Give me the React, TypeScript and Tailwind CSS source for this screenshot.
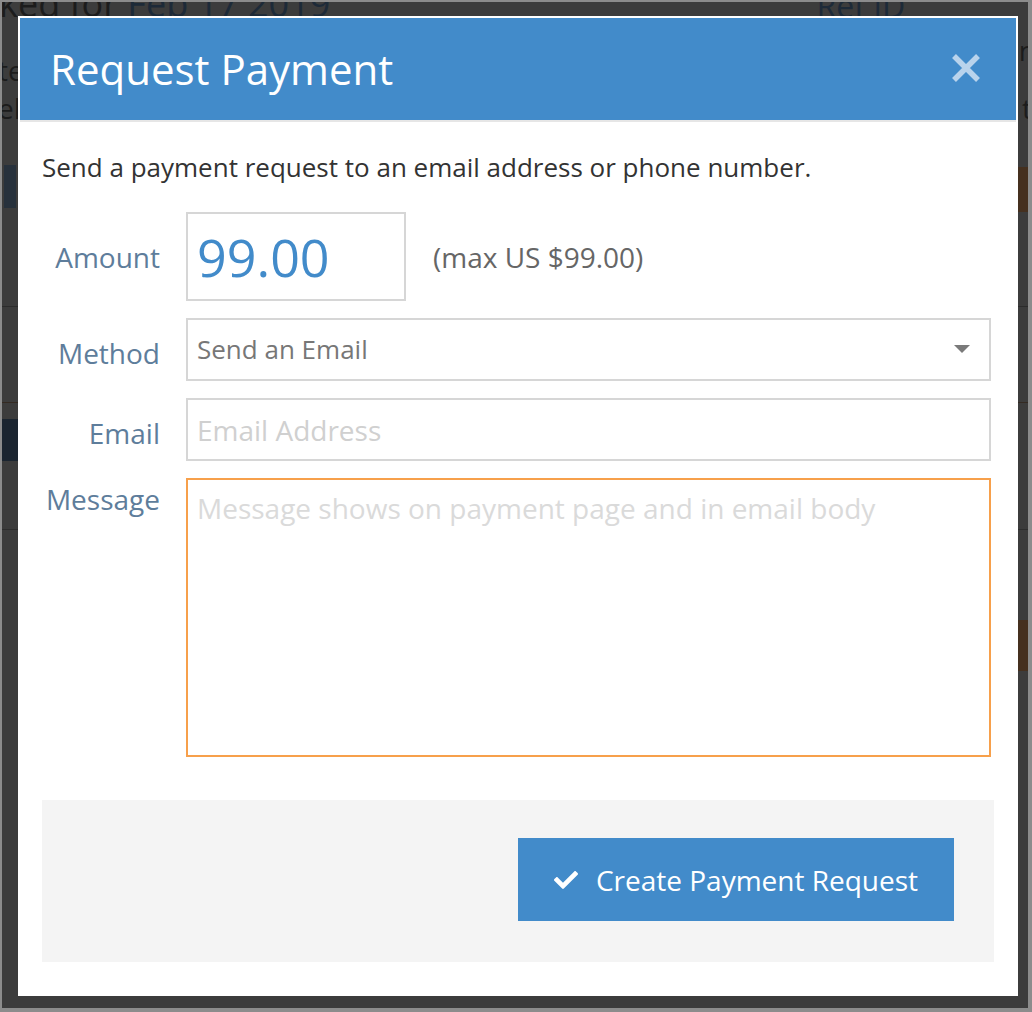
import React from "react";
import { FaCheck } from "react-icons/fa";

const font = { fontFamily: '"Open Sans", "Noto Sans", sans-serif' };

function Background() {
  return (
    <div className="flex h-full w-full flex-col overflow-hidden bg-[#3c3c3c] text-[#1c1c1c]">
      <div className="-mt-[14px] flex h-[34px] items-end leading-none">
        <span className="ml-[-3px] text-[36px]">
          ked for <span className="text-[#1d2a38]">Feb 17 2019</span>
        </span>
        <span className="ml-[486px] text-[32px] text-[#1d2a38]">Ref ID</span>
      </div>
      <div className="mt-[34px] flex h-[28px] justify-between text-[28px] leading-none">
        <span className="ml-[-4px]">te</span>
        <span className="mr-[-8px] -mt-[20px]">n</span>
      </div>
      <div className="mt-[10px] flex h-[28px] justify-between text-[28px] leading-none">
        <span className="ml-[-4px]">el</span>
        <span className="mr-[-4px]">t</span>
      </div>
      <div className="mt-[10px] flex h-[80px] justify-between">
        <div className="mt-[33px] ml-[2px] h-[43px] w-[12px] bg-[#27313c]" />
        <div className="mt-[35px] h-[45px] w-[10px] bg-[#45301f]" />
      </div>
      <div className="mt-[94px] h-[1px] w-full bg-[#2c2c2c]" />
      <div className="mt-[95px] h-[1px] w-full bg-[#342a22]" />
      <div className="mt-[16px] flex h-[42px] justify-start">
        <div className="h-[42px] w-[18px] bg-[#1b2530]" />
      </div>
      <div className="mt-[68px] h-[1px] w-full bg-[#2e2e2e]" />
      <div className="mt-[90px] flex justify-end">
        <div className="h-[51px] w-[10px] bg-[#45301f]" />
      </div>
    </div>
  );
}

function Label({ children, pt }: { children: React.ReactNode; pt: string }) {
  return (
    <div className={`w-[118px] shrink-0 whitespace-nowrap text-right text-[28px] leading-[36px] text-[#5e7d9b] ${pt}`}>
      {children}
    </div>
  );
}

export default function App() {
  return (
    <div className="relative h-[1012px] w-[1032px] overflow-hidden border-t-[2px] border-l-[2px] border-r-[4px] border-b-[4px] border-[#8c8c8c]" style={font}>
      <Background />
      <div className="absolute left-[16px] top-[14px] flex h-[980px] w-[1000px] flex-col bg-white p-[2px]">
        <div className="flex h-[102px] items-center justify-between bg-[#428bca] pl-[30px] pr-[34px]">
          <h1 className="text-[42px] font-normal leading-none text-white">Request Payment</h1>
          <svg width="32" height="32" viewBox="0 0 32 32" className="mt-[-2px]">
            <path d="M4 4 L28 28 M28 4 L4 28" stroke="#b9d3ec" strokeWidth="5.5" strokeLinecap="butt" />
          </svg>
        </div>
        <div className="h-[2px] bg-[#e6e6e6]" />
        <div className="flex flex-1 flex-col px-[22px]">
          <p className="mt-[28px] whitespace-nowrap text-[26px] leading-[34px] text-[#333333]">
            Send a payment request to an email address or phone number.
          </p>
          <div className="mt-[28px] flex flex-col gap-[17px] pr-[3px]">
            <div className="flex gap-[26px]">
              <Label pt="pt-[27px]">Amount</Label>
              <div className="flex items-center">
                <div className="flex h-[89px] w-[220px] items-center border-2 border-[#d6d6d6] px-[9px]">
                  <span className="text-[52px] leading-none text-[#428bca]">99.00</span>
                </div>
                <span className="ml-[27px] whitespace-nowrap text-[28px] text-[#666666]">(max US $99.00)</span>
              </div>
            </div>
            <div className="flex gap-[26px]">
              <Label pt="pt-[17px]">Method</Label>
              <div className="flex h-[63px] flex-1 items-center justify-between border-2 border-[#d6d6d6] pl-[9px] pr-[19px]">
                <span className="text-[26px] text-[#777777]">Send an Email</span>
                <svg width="16" height="9" viewBox="0 0 16 9">
                  <path d="M0 0 H16 L8 8 Z" fill="#7a7a7a" />
                </svg>
              </div>
            </div>
            <div className="flex gap-[26px]">
              <Label pt="pt-[17px]">Email</Label>
              <div className="flex h-[63px] flex-1 items-center border-2 border-[#d6d6d6] pl-[9px]">
                <span className="text-[28px] text-[#d0d0d0]">Email Address</span>
              </div>
            </div>
            <div className="flex gap-[26px]">
              <Label pt="pt-[3px]">Message</Label>
              <div className="h-[279px] flex-1 border-2 border-[#f7a04b] pl-[9px] pt-[10px]">
                <span className="whitespace-nowrap text-[28px] leading-[36px] text-[#dadada]">
                  Message shows on payment page and in email body
                </span>
              </div>
            </div>
          </div>
          <div className="mt-[43px] flex h-[162px] justify-end bg-[#f4f4f4] pr-[40px] pt-[38px]">
            <button className="flex h-[83px] w-[436px] items-center justify-center gap-[18px] bg-[#428bca] text-[28px] text-white">
              <FaCheck className="h-[24px] w-[24px]" />
              <span>Create Payment Request</span>
            </button>
          </div>
        </div>
      </div>
    </div>
  );
}
